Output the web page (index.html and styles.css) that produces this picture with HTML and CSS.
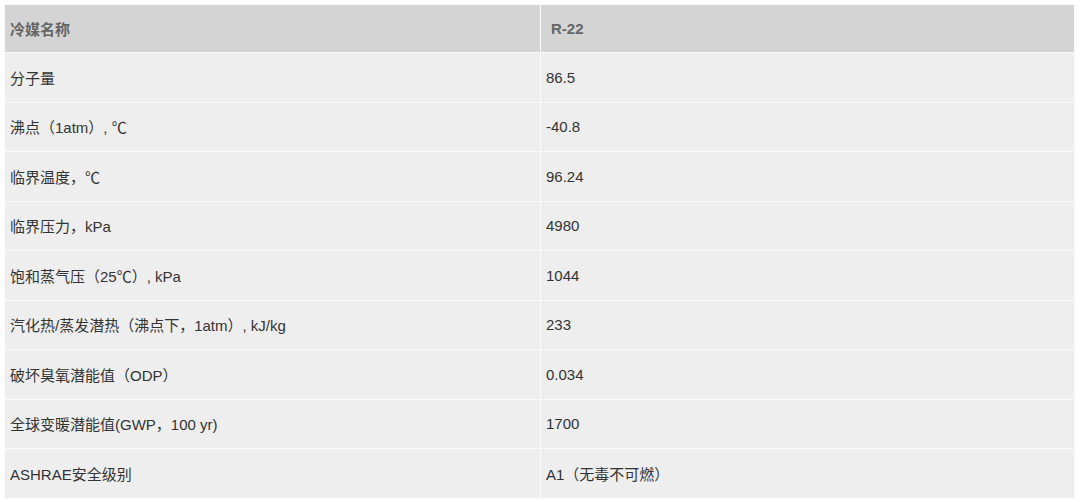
FILE: index.html
```html
<!DOCTYPE html>
<html lang="zh-CN">
<head>
<meta charset="utf-8">
<title>R-22</title>
<link rel="stylesheet" href="styles.css">
</head>
<body>
<table class="spec">
  <thead>
    <tr><th>冷媒名称</th><th class="val-head">R-22</th></tr>
  </thead>
  <tbody>
    <tr><td>分子量</td><td>86.5</td></tr>
    <tr><td>沸点（1atm）, ℃</td><td>-40.8</td></tr>
    <tr><td>临界温度，℃</td><td>96.24</td></tr>
    <tr><td>临界压力，kPa</td><td>4980</td></tr>
    <tr><td>饱和蒸气压（25℃）, kPa</td><td>1044</td></tr>
    <tr><td>汽化热/蒸发潜热（沸点下，1atm）, kJ/kg</td><td>233</td></tr>
    <tr><td>破坏臭氧潜能值（ODP）</td><td>0.034</td></tr>
    <tr><td>全球变暖潜能值(GWP，100 yr)</td><td>1700</td></tr>
    <tr><td>ASHRAE安全级别</td><td>A1（无毒不可燃）</td></tr>
  </tbody>
</table>
</body>
</html>
```

FILE: styles.css
```css
html, body {
  margin: 0;
  padding: 0;
  background: #ffffff;
}
body {
  padding: 4px 5px 0 4px;
  font-family: "Liberation Sans", Arial, "Noto Sans CJK SC", sans-serif;
  font-size: 15px;
  color: #333333;
}
.spec {
  width: 1071px;
  border-collapse: collapse;
  table-layout: fixed;
}
.spec th,
.spec td {
  height: 48.5px;
  padding: 0 5px;
  text-align: left;
  vertical-align: middle;
  border: 1px solid #fafafa;
  box-sizing: border-box;
}
.spec th:first-child,
.spec td:first-child {
  width: 536px;
}
.spec thead th {
  background: #d4d4d4;
  color: #666666;
  font-weight: bold;
  height: 48px;
}
.spec thead th.val-head {
  padding-left: 10px;
}
.spec tbody td {
  background: #eeeeee;
  height: 49.5px;
}
```
